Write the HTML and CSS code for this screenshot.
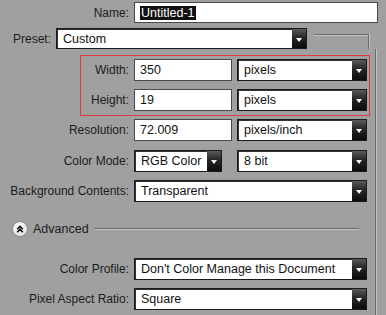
FILE: index.html
```html
<!DOCTYPE html>
<html lang="en">
<head>
    <meta charset="UTF-8">
    <title>New Document</title>
    <link rel="stylesheet" href="styles.css">
</head>
<body>
    <div class="dialog">
        <div class="row name-row">
            <label class="lbl">Name:</label>
            <div class="field name-field"><span class="selected">Untitled-1</span></div>
        </div>
        <div class="preset-row">
            <label class="preset-lbl">Preset:</label>
            <div class="select preset-select"><span class="val">Custom</span><span class="btn"></span></div>
            <div class="group-top"></div>
        </div>
        <div class="group">
            <div class="size-box">
                <div class="row">
                    <label class="lbl">Width:</label>
                    <div class="field num">350</div>
                    <div class="select unit"><span class="val">pixels</span><span class="btn"></span></div>
                </div>
                <div class="row">
                    <label class="lbl">Height:</label>
                    <div class="field num">19</div>
                    <div class="select unit"><span class="val">pixels</span><span class="btn"></span></div>
                </div>
            </div>
            <div class="row res-row">
                <label class="lbl">Resolution:</label>
                <div class="field num">72.009</div>
                <div class="select unit"><span class="val">pixels/inch</span><span class="btn"></span></div>
            </div>
            <div class="row mode-row">
                <label class="lbl">Color Mode:</label>
                <div class="select mode"><span class="val">RGB Color</span><span class="btn"></span></div>
                <div class="select bits"><span class="val">8 bit</span><span class="btn"></span></div>
            </div>
            <div class="row bg-row">
                <label class="lbl">Background Contents:</label>
                <div class="select wide"><span class="val">Transparent</span><span class="btn"></span></div>
            </div>
            <div class="advanced">
                <span class="toggle">
                    <svg width="14" height="14" viewBox="0 0 14 14">
                        <path d="M4.2 7.2 L7 4.4 L9.8 7.2 M4.2 10.2 L7 7.4 L9.8 10.2" fill="none" stroke="#111" stroke-width="1.6"/>
                    </svg>
                </span>
                <span class="adv-text">Advanced</span>
                <span class="rule"></span>
            </div>
            <div class="row profile-row">
                <label class="lbl">Color Profile:</label>
                <div class="select wide"><span class="val">Don't Color Manage this Document</span><span class="btn"></span></div>
            </div>
            <div class="row aspect-row">
                <label class="lbl">Pixel Aspect Ratio:</label>
                <div class="select wide"><span class="val">Square</span><span class="btn"></span></div>
            </div>
        </div>
    </div>
</body>
</html>
```

FILE: styles.css
```css
body {
    margin: 0;
    background: #a0a0a0;
    font-family: 'Liberation Sans', Arial, sans-serif;
    font-size: 12px;
    color: #1c1c1c;
    overflow: hidden;
}
.dialog {
    width: 386px;
    height: 315px;
    display: flex;
    flex-direction: column;
}
.row {
    display: flex;
    align-items: center;
    height: 22px;
}
.lbl {
    width: 129px;
    margin-right: 5px;
    text-align: right;
    white-space: nowrap;
}
.field {
    box-sizing: border-box;
    height: 22px;
    background: #fff;
    border: 1px solid #4a4a4a;
    padding-left: 5px;
    font-size: 12.5px;
    display: flex;
    align-items: center;
    color: #111;
}
.name-row {
    margin-top: 2px;
    height: 21px;
}
.name-field {
    width: 244px;
    height: 21px;
}
.selected {
    background: #111;
    color: #fff;
    padding: 0 1px;
    line-height: 14px;
}
.num {
    width: 98px;
}
.select {
    box-sizing: border-box;
    height: 22px;
    background: #fff;
    border: 1px solid #1a1a1a;
    box-shadow: inset 1px 1px 0 #333;
    display: flex;
    align-items: stretch;
    font-size: 12.5px;
    color: #111;
}
.select .val {
    flex: 1;
    padding-left: 6px;
    display: flex;
    align-items: center;
    white-space: nowrap;
    overflow: hidden;
}
.select .btn {
    width: 14px;
    position: relative;
    background: linear-gradient(#5a5a5a, #262626 45%, #0c0c0c);
}
.select .btn::after {
    content: '';
    position: absolute;
    left: 4px;
    top: 9px;
    border-left: 3px solid transparent;
    border-right: 3px solid transparent;
    border-top: 4px solid #fff;
}
.preset-row {
    display: flex;
    margin-top: 5px;
    height: 21px;
}
.preset-lbl {
    margin-left: 13px;
    margin-right: 5px;
    align-self: center;
}
.preset-select {
    width: 251px;
    height: 21px;
}
.group-top {
    margin-left: 7px;
    margin-top: 6px;
    width: 54px;
    border-top: 1px solid #6a6a6a;
    border-right: 1px solid #6a6a6a;
    box-shadow: inset 0 1px 0 #c6c6c6, 1px 0 0 #c6c6c6;
}
.group {
    flex: 1;
    width: 375px;
    border-right: 1px solid #6a6a6a;
    box-shadow: 1px 0 0 #c6c6c6;
}
.size-box {
    margin: 6px 0 0 80px;
    width: 290px;
    box-sizing: border-box;
    border: 1px solid #e23a3a;
    padding: 3px 0 4px;
    display: flex;
    flex-direction: column;
    gap: 8px;
}
.size-box .lbl {
    width: 48px;
}
.unit {
    width: 130px;
    margin-left: 5px;
}
.res-row {
    margin-top: 3px;
}
.mode-row {
    margin-top: 9px;
}
.mode {
    width: 88px;
}
.bits {
    width: 130px;
    margin-left: 15px;
}
.bg-row {
    margin-top: 8px;
}
.wide {
    width: 233px;
}
.advanced {
    display: flex;
    align-items: center;
    height: 14px;
    margin: 20px 16px 0 13px;
}
.toggle {
    width: 14px;
    height: 14px;
    border-radius: 50%;
    background: radial-gradient(circle at 40% 35%, #fff, #e4e4e4 70%, #c8c8c8);
    box-shadow: 0 0 0 1px #8c8c8c;
    display: flex;
}
.adv-text {
    margin-left: 6px;
    font-size: 12.5px;
}
.rule {
    flex: 1;
    margin-left: 5px;
    margin-top: -1px;
    border-top: 1px solid #6a6a6a;
    box-shadow: 0 1px 0 #c6c6c6;
}
.profile-row {
    margin-top: 22px;
}
.aspect-row {
    margin-top: 8px;
}
```
